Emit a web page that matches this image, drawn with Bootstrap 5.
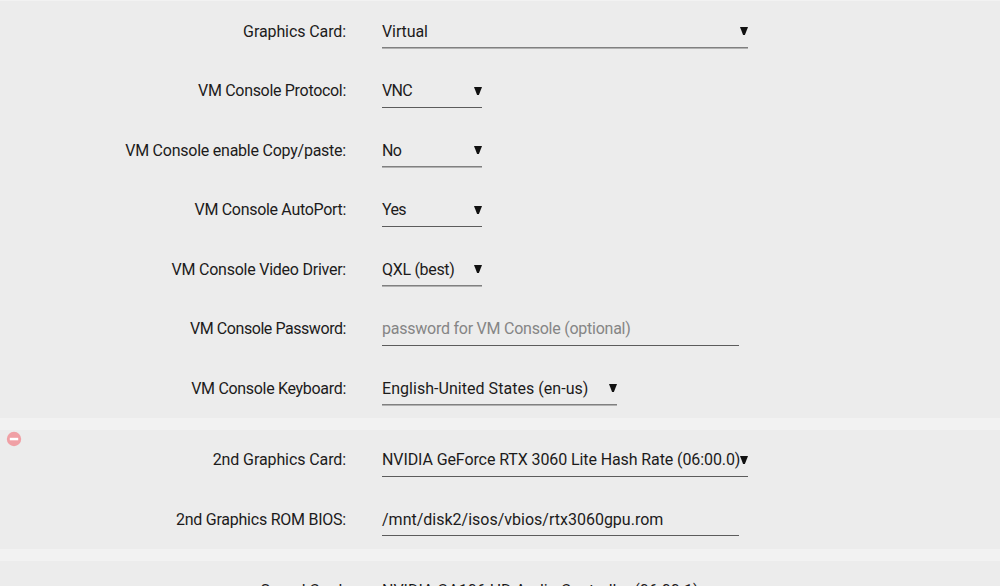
<!DOCTYPE html>
<html lang="en">
<head>
<meta charset="utf-8">
<meta name="viewport" content="width=device-width, initial-scale=1">
<title>VM graphics settings</title>
<link href="https://cdn.jsdelivr.net/npm/bootstrap@5.3.0/dist/css/bootstrap.min.css" rel="stylesheet">
<style>
body{background:#f2f2f2;font-family:Roboto,"Noto Sans",sans-serif;font-size:16px;line-height:24px;color:#1c1b1b}
main{height:586px}
.panel{background:#ececec;margin-bottom:12px;flex-shrink:0}
.first{margin-top:1px}
.last{height:25px;overflow:hidden}
.line{height:59.5px;padding-top:18.5px}
.tag{width:346px}
.ctl{margin-left:36px;height:28.5px;border-bottom:1px solid #5c5c5c}
.soft{border-bottom-color:#808080;box-shadow:0 1px #b2b2b2}
.w-s{width:99.5px}.w-m{width:234.5px}.w-l{width:357px}.w-xl{width:366px}
.ctl svg{width:8px;height:8px;margin-top:7.75px}
.hint{color:#858585}
.minus{left:6px;top:1px;width:16px;height:16px}
.t1{letter-spacing:-.1px}.t2{letter-spacing:-.24px}.t3{letter-spacing:-.31px}.t4{letter-spacing:-.44px}.t5{letter-spacing:-.65px}.t0{letter-spacing:.04px}
</style>
</head>
<body class="overflow-hidden">
<main class="d-flex flex-column text-nowrap overflow-hidden">
<section class="panel first">
<div class="line d-flex"><div class="tag text-end"><span class="t1">Graphics Card:</span></div><div class="ctl soft w-xl d-flex justify-content-between"><span class="t1">Virtual</span><svg viewBox="0 0 8 8"><path d="M0 0h8L4.9 8H3.1z" fill="#111"/></svg></div></div>
<div class="line d-flex"><div class="tag text-end"><span class="t3">VM Console Protocol:</span></div><div class="ctl w-s d-flex justify-content-between"><span class="t5">VNC</span><svg viewBox="0 0 8 8"><path d="M0 0h8L4.9 8H3.1z" fill="#111"/></svg></div></div>
<div class="line d-flex"><div class="tag text-end"><span class="t2">VM Console enable Copy/paste:</span></div><div class="ctl soft w-s d-flex justify-content-between"><span class="t5">No</span><svg viewBox="0 0 8 8"><path d="M0 0h8L4.9 8H3.1z" fill="#111"/></svg></div></div>
<div class="line d-flex"><div class="tag text-end"><span class="t3">VM Console AutoPort:</span></div><div class="ctl w-s d-flex justify-content-between"><span class="t5">Yes</span><svg viewBox="0 0 8 8"><path d="M0 0h8L4.9 8H3.1z" fill="#111"/></svg></div></div>
<div class="line d-flex"><div class="tag text-end"><span class="t2">VM Console Video Driver:</span></div><div class="ctl soft w-s d-flex justify-content-between"><span class="t3">QXL (best)</span><svg viewBox="0 0 8 8"><path d="M0 0h8L4.9 8H3.1z" fill="#111"/></svg></div></div>
<div class="line d-flex"><div class="tag text-end"><span class="t4">VM Console Password:</span></div><div class="ctl w-l"><span class="hint t2">password for VM Console (optional)</span></div></div>
<div class="line d-flex"><div class="tag text-end"><span class="t3">VM Console Keyboard:</span></div><div class="ctl soft w-m d-flex justify-content-between"><span class="t0">English-United States (en-us)</span><svg viewBox="0 0 8 8"><path d="M0 0h8L4.9 8H3.1z" fill="#111"/></svg></div></div>
</section>
<section class="panel position-relative">
<svg class="minus position-absolute" viewBox="0 0 16 16"><circle cx="8" cy="8" r="7.2" fill="#f0a0a5"/><path d="M3.8 6.8h8.4v2.5H3.8z" fill="#fff"/></svg>
<div class="line d-flex"><div class="tag text-end"><span class="t1">2nd Graphics Card:</span></div><div class="ctl w-xl d-flex justify-content-between"><span class="overflow-hidden t1">NVIDIA GeForce RTX 3060 Lite Hash Rate (06:00.0)</span><svg class="flex-shrink-0" viewBox="0 0 8 8"><path d="M0 0h8L4.9 8H3.1z" fill="#111"/></svg></div></div>
<div class="line d-flex"><div class="tag text-end"><span class="t2">2nd Graphics ROM BIOS:</span></div><div class="ctl w-l"><span>/mnt/disk2/isos/vbios/rtx3060gpu.rom</span></div></div>
</section>
<section class="panel last mb-0">
<div class="line d-flex"><div class="tag text-end"><span class="t1">Sound Card:</span></div><div class="ctl w-xl"><span>NVIDIA GA106 HD Audio Controller (06:00.1)</span></div></div>
</section>
</main>
<script src="https://cdn.jsdelivr.net/npm/bootstrap@5.3.0/dist/js/bootstrap.bundle.min.js"></script>
</body>
</html>
